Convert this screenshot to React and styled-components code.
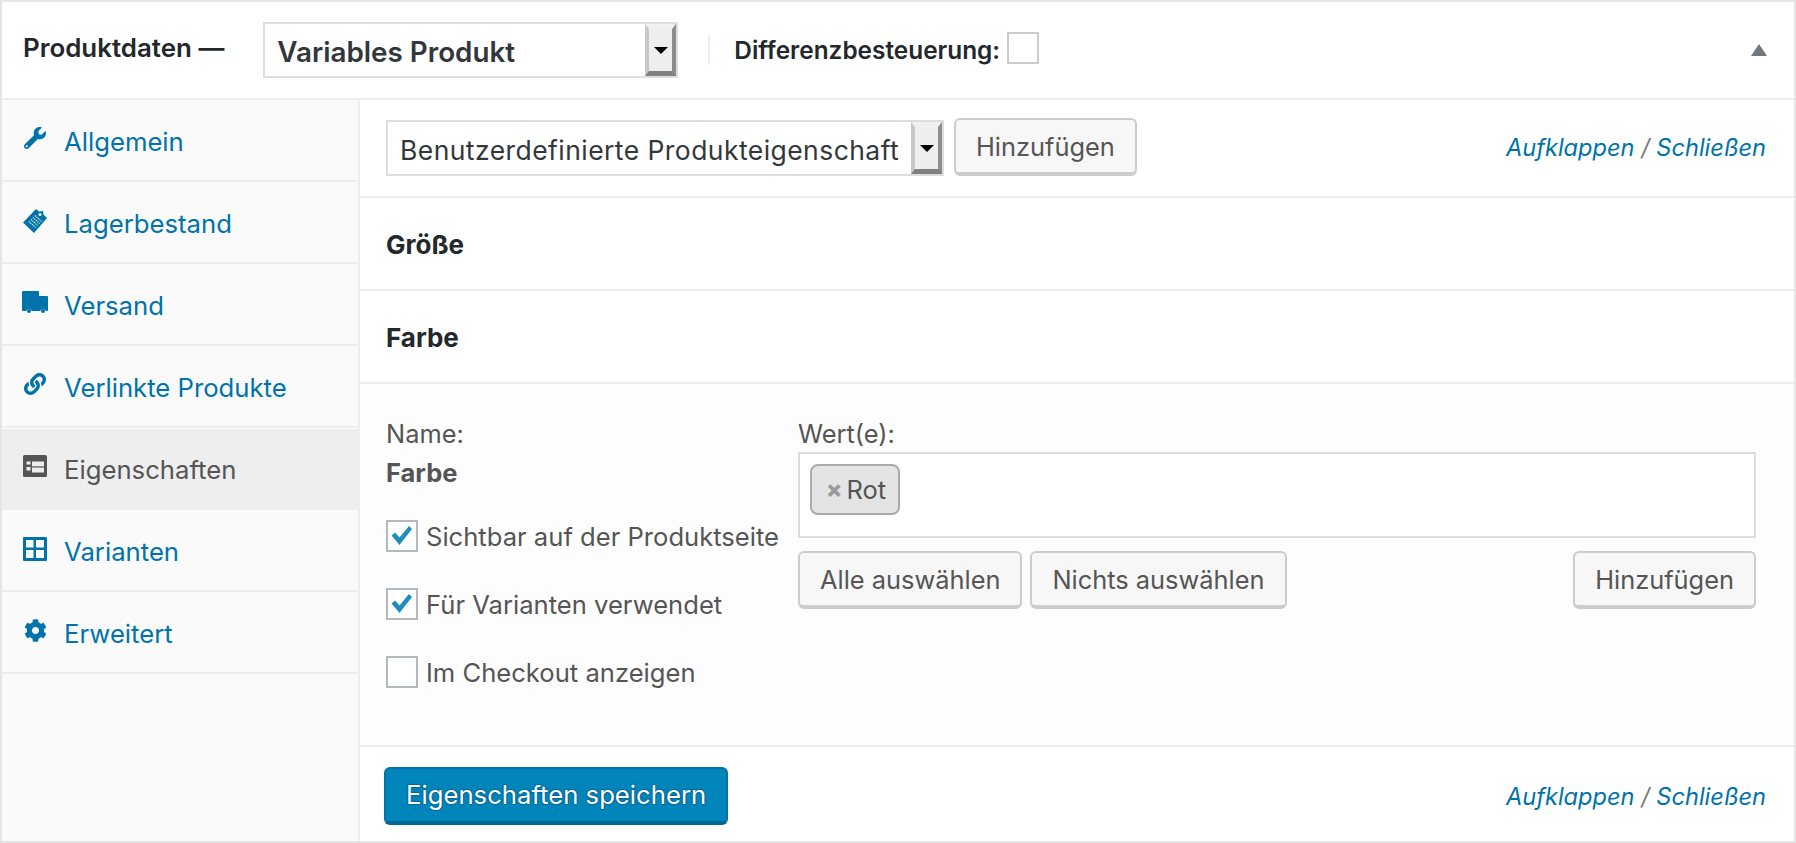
import React from "react";
import styled, { createGlobalStyle } from "styled-components";
import { FaWrench, FaCog, FaLink } from "react-icons/fa";

const Global = createGlobalStyle`
  html, body { margin: 0; padding: 0; background: #fff; }
  body { font-family: Inter, "Liberation Sans", sans-serif; color: #555; }
  * { box-sizing: border-box; }
`;

const Box = styled.div`
  width: 1796px;
  height: 843px;
  border: 2px solid #e5e5e5;
  display: flex;
  flex-direction: column;
  background: #fff;
`;
const Header = styled.header`
  height: 98px;
  flex: none;
  display: flex;
  align-items: center;
  padding: 0 27px 0 21px;
  border-bottom: 2px solid #eee;
`;
const Title = styled.h2`
  margin: 0 39px 6px 0;
  font-size: 25.9px;
  font-weight: 600;
  color: #23282d;
  white-space: nowrap;
`;
const Select = styled.div`
  display: flex;
  align-items: center;
  justify-content: space-between;
  height: 56px;
  width: ${p => p.$w}px;
  flex: none;
  border: 2px solid #ddd;
  background: #fff;
  padding: 0 0 0 12px;
  color: #32373c;
  font-size: ${p => p.$size}px;
  letter-spacing: ${p => p.$track || 0}px;
  font-weight: ${p => p.$bold ? 600 : 400};
  white-space: nowrap;
`;
const ToolSelect = styled(Select)`
  margin-top: 2px;
`;
const SelectText = styled.span`
  margin-top: 3px;
`;
const Spin = styled.span`
  flex: none;
  width: 31px;
  height: 52px;
  background: #eee;
  border-style: solid;
  border-width: 5px 4px 5px 4px;
  border-color: #f0f0f0 #8c8c8c #808080 #c8c8c8;
  display: flex;
  align-items: center;
  justify-content: center;
  &::after {
    content: "";
    border-style: solid;
    border-width: 7px 7px 0;
    border-color: #000 transparent transparent;
  }
`;
const Divider = styled.span`
  width: 2px;
  height: 30px;
  background: #eee;
  margin: 0 24px 0 30px;
`;
const Strong = styled.span`
  font-weight: 600;
  font-size: 24.4px;
  color: #23282d;
  margin-right: 7px;
  white-space: nowrap;
`;
const Check = styled.span`
  flex: none;
  width: 32px;
  height: 32px;
  border: 2px solid #b4b9be;
  background: #fff;
  display: inline-flex;
  align-items: center;
  justify-content: center;
`;
const HeaderCheck = styled(Check)`
  border-color: #ccc;
  margin-bottom: 4px;
`;
const Caret = styled.span`
  margin-left: auto;
  width: 0;
  height: 0;
  border-style: solid;
  border-width: 0 8px 12px;
  border-color: transparent transparent #72777c;
`;
const Body = styled.div`
  flex: 1;
  display: flex;
  min-height: 0;
`;
const Side = styled.nav`
  width: 358px;
  flex: none;
  background: #fafafa;
  border-right: 2px solid #eee;
`;
const Tab = styled.a`
  height: 82px;
  display: flex;
  align-items: center;
  border-bottom: 2px solid #eee;
  background: ${p => p.$active ? "#eee" : "transparent"};
  box-shadow: ${p => p.$active ? "inset 0 1px 0 #fff" : "none"};
  color: ${p => p.$active ? "#555" : "#0073aa"};
  font-size: 25.7px;
  padding: 3px 0 0 20px;
`;
const TabIcon = styled.span`
  width: 26px;
  height: 30px;
  flex: none;
  display: flex;
  align-items: flex-start;
  justify-content: center;
  margin-right: 16px;
`;
const Main = styled.main`
  flex: 1;
  min-width: 0;
  display: flex;
  flex-direction: column;
`;
const Toolbar = styled.div`
  height: 98px;
  flex: none;
  display: flex;
  align-items: center;
  padding: 0 28px 2px 26px;
  border-bottom: 2px solid #eee;
  gap: 10px;
`;
const Links = styled.span`
  margin-left: auto;
  font-style: italic;
  font-size: 23.6px;
  color: #777;
  white-space: nowrap;
`;
const Link = styled.a`
  color: #0073aa;
`;
const Button = styled.button`
  height: 58px;
  padding: 0 20px;
  font: inherit;
  font-size: 25.4px;
  color: #555;
  background: #f7f7f7;
  border: 2px solid #ccc;
  border-bottom-width: 4px;
  border-radius: 6px;
  white-space: nowrap;
`;
const Row = styled.div`
  height: 93px;
  flex: none;
  display: flex;
  align-items: center;
  padding: 2px 26px 0;
  border-bottom: 2px solid #eee;
  font-weight: 700;
  font-size: 26px;
  color: #23282d;
`;
const Detail = styled.div`
  flex: 1;
  background: #fdfdfd;
  border-bottom: 2px solid #eee;
  padding: 35px 38px 0 26px;
  display: grid;
  grid-template-columns: 412px 1fr;
  align-items: start;
`;
const Col = styled.div`
  display: flex;
  flex-direction: column;
`;
const Label = styled.div`
  font-size: 25.4px;
  line-height: 30px;
`;
const Value = styled.div`
  font-size: 25.5px;
  line-height: 30px;
  font-weight: 700;
  margin-top: 9px;
  margin-bottom: 32px;
`;
const CheckRow = styled.label`
  display: flex;
  align-items: center;
  gap: 8px;
  height: 32px;
  margin-bottom: 36px;
  font-size: 25.6px;
  white-space: nowrap;
`;
const Values = styled.div`
  height: 86px;
  margin-top: 3px;
  margin-bottom: 13px;
  border: 2px solid #ddd;
  background: #fff;
  padding: 10px;
`;
const Chip = styled.span`
  display: inline-flex;
  align-items: center;
  height: 51px;
  padding: 0 12px 0 14px;
  background: #e4e4e4;
  border: 2px solid #aaa;
  border-radius: 8px;
  color: #555;
  font-size: 25.5px;
  gap: 4px;
`;
const Remove = styled.span`
  color: #999;
  font-weight: 800;
  font-size: 24px;
`;
const Buttons = styled.div`
  display: flex;
  gap: 8px;
`;
const PushedButton = styled(Button)`
  margin-left: auto;
`;
const Footer = styled.footer`
  height: 94px;
  flex: none;
  display: flex;
  align-items: center;
  padding: 4px 28px 0 24px;
`;
const Primary = styled.button`
  height: 58px;
  padding: 0 20px 2px;
  font: inherit;
  font-size: 25.7px;
  color: #fff;
  background: #0085ba;
  border: 2px solid #0073aa;
  border-bottom: 4px solid #006799;
  border-radius: 6px;
  white-space: nowrap;
  text-shadow: 0 -1px 1px #006799, 1px 0 1px #006799, 0 1px 1px #006799, -1px 0 1px #006799;
`;

const TagIcon = () => (
  <svg width="26" height="26" viewBox="0 0 26 26" style={{ marginTop: -1 }}>
    <path fill="currentColor" d="M14 1l3 2.500 4-.5 .5 3.500L25 10 12 25 1 14.500Z" />
    <path stroke="#fafafa" strokeWidth="1.100" strokeDasharray="1.200 .8" fill="none" d="M13 7.500l6.500 6M11 9.500l6.500 6M9 11.500l6.500 6M7 13.500l6.500 6" />
    <circle cx="18" cy="6.500" r="1.500" fill="#fafafa" />
  </svg>
);
const TruckIcon = () => (
  <svg width="26" height="22" viewBox="0 0 26 22">
    <path fill="currentColor" d="M1 0h15a1 1 0 0 1 1 1v4h8a1 1 0 0 1 1 1v13a1 1 0 0 1-1 1h-1.200a3 3 0 0 0-5.600 0H9.800a3 3 0 0 0-5.600 0H1a1 1 0 0 1-1-1V1a1 1 0 0 1 1-1Z" />
    <circle cx="7" cy="20" r="2" fill="currentColor" />
    <circle cx="21" cy="20" r="2" fill="currentColor" />
  </svg>
);
const ListIcon = () => (
  <svg width="24" height="22" viewBox="0 0 24 22">
    <rect width="24" height="22" rx="1.500" fill="currentColor" />
    <path fill="#eee" d="M3.500 6.500h4v3h-4zM9 6.500h12v4.500H9zM3.500 12h4v3.500h-4zM9 12.500h12v5H9z" />
    <path fill="#8a8a8a" d="M9 11h12v1.500H9z" />
  </svg>
);
const GridIcon = () => (
  <svg width="24" height="24" viewBox="0 0 24 24">
    <path fill="currentColor" fillRule="evenodd" d="M1 0h22a1 1 0 0 1 1 1v22a1 1 0 0 1-1 1H1a1 1 0 0 1-1-1V1a1 1 0 0 1 1-1ZM3 3v7.500h7.500V3ZM13 3v7.500h8V3ZM3 13v8h7.500v-8ZM13 13v8h8v-8Z" />
  </svg>
);
const Tick = () => (
  <svg width="24" height="22" viewBox="0 0 24 22">
    <path fill="#1e8cbe" d="M1.500 10.500l3.500-3 4.500 5L19 1l3 3L9.500 20Z" />
  </svg>
);

const tabs = [
  ["Allgemein", <FaWrench size={22} />],
  ["Lagerbestand", <TagIcon />],
  ["Versand", <TruckIcon />],
  ["Verlinkte Produkte", <FaLink size={22} />],
  ["Eigenschaften", <ListIcon />, true],
  ["Varianten", <GridIcon />],
  ["Erweitert", <FaCog size={23} />],
];

const PairedLinks = () => (
  <Links><Link>Aufklappen</Link> / <Link>Schließen</Link></Links>
);

export default function App() {
  return (
    <>
      <Global />
      <Box>
        <Header>
          <Title>Produktdaten —</Title>
          <Select $w={415} $size={27.8} $bold><SelectText>Variables Produkt</SelectText><Spin /></Select>
          <Divider />
          <Strong>Differenzbesteuerung:</Strong>
          <HeaderCheck />
          <Caret />
        </Header>
        <Body>
          <Side>
            {tabs.map(([label, icon, active]) => (
              <Tab key={label} $active={active}>
                <TabIcon>{icon}</TabIcon>
                {label}
              </Tab>
            ))}
          </Side>
          <Main>
            <Toolbar>
              <ToolSelect $w={558} $size={26.5} $track={0.44}><SelectText>Benutzerdefinierte Produkteigenschaft</SelectText><Spin /></ToolSelect>
              <Button>Hinzufügen</Button>
              <PairedLinks />
            </Toolbar>
            <Row>Größe</Row>
            <Row>Farbe</Row>
            <Detail>
              <Col>
                <Label>Name:</Label>
                <Value>Farbe</Value>
                <CheckRow><Check><Tick /></Check>Sichtbar auf der Produktseite</CheckRow>
                <CheckRow><Check><Tick /></Check>Für Varianten verwendet</CheckRow>
                <CheckRow><Check />Im Checkout anzeigen</CheckRow>
              </Col>
              <Col>
                <Label>Wert(e):</Label>
                <Values><Chip><Remove>×</Remove>Rot</Chip></Values>
                <Buttons>
                  <Button>Alle auswählen</Button>
                  <Button>Nichts auswählen</Button>
                  <PushedButton>Hinzufügen</PushedButton>
                </Buttons>
              </Col>
            </Detail>
            <Footer>
              <Primary>Eigenschaften speichern</Primary>
              <PairedLinks />
            </Footer>
          </Main>
        </Body>
      </Box>
    </>
  );
}
